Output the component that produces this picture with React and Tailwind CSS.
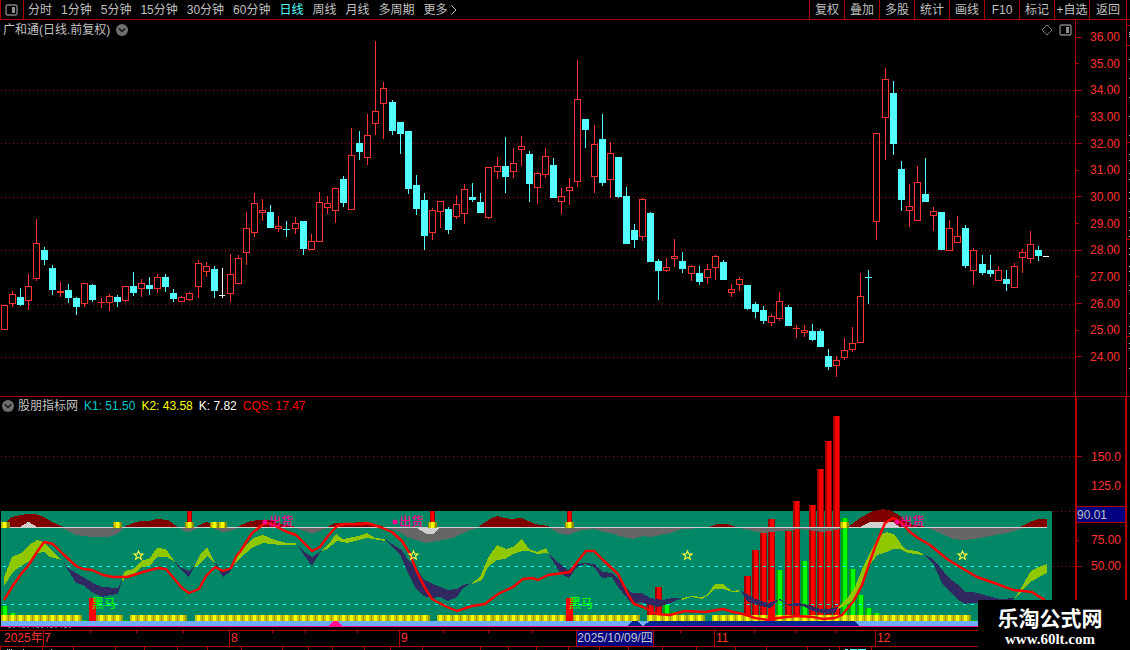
const PERIODS = ['分时', '1分钟', '5分钟', '15分钟', '30分钟', '60分钟', '日线', '周线', '月线', '多周期']

const TOOLS = ['复权', '叠加', '多股', '统计', '画线', 'F10', '标记', '+自选', '返回']

const PRICES = [36, 35, 34, 33, 32, 31, 30, 29, 28, 27, 26, 25, 24]

// x, high, body top, body bottom, low, kind (r = up, c = down, w = flat)
const CANDLES = [
  [4, 305, 305, 330, 330, 'r'], [12, 291, 294, 304, 307, 'r'], [20, 288, 297, 305, 306, 'c'],
  [28, 274, 286, 301, 310, 'r'], [36, 219, 243, 279, 281, 'r'], [44, 247, 250, 260, 265, 'c'],
  [52, 265, 268, 290, 295, 'c'], [60, 282, 291, 293, 297, 'r'], [68, 284, 290, 298, 303, 'c'],
  [76, 297, 298, 307, 315, 'c'], [84, 283, 283, 304, 307, 'r'], [92, 284, 285, 300, 302, 'c'],
  [101, 298, 302, 303, 308, 'r'], [109, 294, 296, 303, 311, 'r'], [117, 295, 297, 302, 307, 'c'],
  [125, 286, 286, 301, 302, 'r'], [133, 272, 286, 293, 296, 'c'], [141, 279, 283, 289, 297, 'r'],
  [149, 277, 285, 289, 295, 'c'], [157, 274, 277, 289, 293, 'r'], [165, 274, 277, 287, 292, 'c'],
  [173, 289, 293, 299, 302, 'c'], [181, 296, 297, 302, 302, 'r'], [189, 292, 293, 300, 301, 'r'],
  [198, 260, 263, 287, 298, 'r'], [206, 262, 266, 272, 277, 'r'], [214, 266, 269, 291, 298, 'c'],
  [222, 268, 295, 296, 298, 'w'], [230, 254, 274, 294, 302, 'r'], [238, 255, 258, 284, 284, 'r'],
  [246, 212, 228, 253, 265, 'r'], [254, 193, 203, 233, 237, 'r'], [262, 199, 210, 213, 221, 'r'],
  [270, 205, 212, 228, 228, 'c'], [278, 216, 226, 229, 232, 'r'], [286, 221, 229, 230, 237, 'c'],
  [295, 217, 223, 229, 234, 'r'], [303, 221, 221, 249, 255, 'c'], [311, 234, 241, 250, 250, 'r'],
  [319, 192, 202, 242, 242, 'r'], [327, 196, 203, 208, 214, 'r'], [335, 188, 188, 211, 223, 'r'],
  [343, 176, 179, 203, 207, 'c'], [351, 128, 155, 210, 210, 'r'], [359, 131, 143, 152, 160, 'c'],
  [367, 114, 135, 158, 165, 'r'], [375, 41, 111, 124, 135, 'r'], [383, 82, 88, 104, 139, 'r'],
  [392, 100, 102, 131, 135, 'c'], [400, 122, 122, 134, 154, 'c'], [408, 131, 131, 189, 194, 'c'],
  [416, 175, 185, 209, 215, 'c'], [424, 193, 200, 236, 250, 'c'], [432, 208, 210, 233, 240, 'r'],
  [440, 201, 201, 212, 228, 'r'], [448, 207, 209, 230, 234, 'c'], [456, 195, 204, 217, 219, 'r'],
  [464, 184, 189, 214, 224, 'r'], [472, 183, 197, 200, 202, 'c'], [480, 193, 202, 213, 213, 'c'],
  [488, 167, 167, 218, 219, 'r'], [497, 157, 166, 172, 179, 'r'], [505, 137, 166, 177, 193, 'c'],
  [513, 148, 163, 172, 178, 'r'], [521, 136, 146, 150, 166, 'r'], [529, 151, 154, 184, 202, 'c'],
  [537, 172, 173, 188, 204, 'r'], [545, 148, 156, 175, 178, 'r'], [553, 158, 165, 198, 198, 'c'],
  [561, 188, 196, 202, 214, 'r'], [569, 178, 187, 191, 205, 'r'], [577, 60, 99, 182, 187, 'r'],
  [585, 119, 119, 130, 148, 'c'], [594, 125, 144, 177, 193, 'r'], [602, 114, 139, 183, 186, 'c'],
  [610, 142, 153, 180, 198, 'r'], [618, 157, 157, 197, 198, 'c'], [626, 187, 196, 244, 244, 'c'],
  [634, 224, 230, 240, 248, 'c'], [642, 198, 199, 237, 241, 'r'], [650, 212, 213, 262, 262, 'c'],
  [658, 259, 261, 271, 300, 'c'], [666, 258, 267, 271, 272, 'r'], [674, 239, 256, 259, 267, 'r'],
  [682, 252, 261, 269, 273, 'c'], [691, 265, 266, 274, 281, 'r'], [699, 266, 273, 282, 285, 'c'],
  [707, 264, 269, 278, 284, 'r'], [715, 255, 256, 268, 280, 'r'], [723, 260, 262, 280, 280, 'c'],
  [731, 284, 289, 293, 297, 'r'], [739, 277, 279, 285, 291, 'r'], [747, 285, 285, 309, 310, 'c'],
  [755, 302, 304, 312, 318, 'c'], [763, 306, 310, 321, 324, 'c'], [771, 314, 316, 323, 326, 'r'],
  [779, 292, 301, 319, 321, 'r'], [788, 305, 307, 326, 326, 'c'], [796, 325, 328, 329, 338, 'r'],
  [804, 325, 330, 333, 337, 'r'], [812, 324, 331, 340, 341, 'c'], [820, 329, 331, 347, 347, 'c'],
  [828, 349, 356, 367, 370, 'c'], [836, 356, 360, 366, 377, 'r'], [844, 338, 350, 358, 360, 'r'],
  [852, 327, 343, 350, 352, 'r'], [860, 273, 296, 343, 343, 'r'], [868, 270, 277, 278, 304, 'c'],
  [876, 133, 133, 222, 240, 'r'], [885, 68, 79, 118, 160, 'r'], [893, 81, 93, 144, 155, 'c'],
  [901, 161, 169, 200, 211, 'c'], [909, 184, 206, 211, 227, 'r'], [917, 166, 182, 221, 221, 'r'],
  [925, 158, 194, 202, 202, 'c'], [933, 207, 211, 216, 231, 'r'], [941, 212, 212, 250, 250, 'c'],
  [949, 220, 228, 251, 251, 'r'], [957, 216, 236, 243, 243, 'r'], [965, 225, 228, 266, 268, 'c'],
  [973, 248, 250, 271, 285, 'r'], [982, 255, 264, 273, 275, 'c'], [990, 255, 270, 274, 277, 'c'],
  [998, 266, 270, 281, 281, 'r'], [1006, 270, 279, 284, 291, 'c'], [1014, 263, 266, 288, 288, 'r'],
  [1022, 249, 252, 258, 273, 'r'], [1030, 231, 244, 259, 263, 'r'], [1038, 246, 250, 256, 261, 'c'],
  [1046, 256, 256, 257, 257, 'w'],
]

const CANDLE_COLORS = { r: '#ff3232', c: '#54ffff', w: '#ffffff' }

// areas above the 90 line
const HUMPS = [
  '2,527 4,524 8,520 12,517 20,515 28,514 36,514 44,517 52,522 64,527',
  '124,527 133,523 141,521 149,521 157,519 168,520 178,527',
  '196,527 206,522 214,524 218,527',
  '237,527 248,522 257,520 270,520 280,524 297,527',
  '327,527 335,523 345,523 367,522 385,527',
  '478,527 490,519 497,516 510,519 522,518 535,524 548,526 550,527',
  '708,527 717,524 728,524 736,527',
  '848,527 860,518 873,511 883,509 892,511 900,516 905,520 913,525 928,527',
  '1020,527 1032,521 1038,519 1047,519 1047,527',
]

// areas below it
const DIPS = [
  '62,528 76,535 92,537 108,537 117,534 124,528',
  '180,528 185,531 189,532 198,528',
  '213,528 222,532 230,531 238,528',
  '296,528 312,534 327,528',
  '387,528 398,531 407,537 425,543 437,541 453,538 468,531 477,528',
  '550,528 558,533 568,535 582,530 595,529 603,532 610,533 622,537 633,539 642,536 650,537 670,533 683,529 703,528',
  '740,528 753,531 763,533 780,531 800,529 823,532 847,528',
  '928,528 940,533 953,539 962,540 975,539 990,536 1007,533 1018,530 1023,528',
]

const CAPS = [
  '20,527 28,522 29,522 37,527',
  '417,528 422,531 427,534 433,534 440,528',
  '860,527 870,522 893,522 900,527',
]

const RISING = [
  '4,577 12,557 21,553 29,545 37,540 44,542 53,552 62,560 50,557 44,552 37,553 28,562 21,566 13,572 4,586',
  '122,578 125,571 134,569 142,560 149,559 157,548 166,549 175,562 167,557 157,557 150,566 142,567 133,575 125,577 123,582',
  '194,567 200,555 207,547 212,557 215,563 207,556 197,566',
  '233,563 240,552 253,538 263,535 275,540 287,543 296,543 296,545 280,545 263,543 252,548 240,558 233,565',
  '321,551 328,545 336,534 343,539 358,536 367,533 375,538 385,539 385,541 367,538 347,543 337,541 327,549',
  '472,583 480,577 488,558 497,545 506,549 513,547 522,539 529,549 537,552 546,548 549,554 546,553 537,554 528,551 522,551 513,554 505,559 497,560 488,567 482,580 472,584',
  '682,598 692,596 702,597 707,595 715,584 723,584 732,591 739,590 739,592 732,592 723,589 715,589 707,596 702,599 692,597 682,600',
  '838,607 847,599 855,587 863,567 875,543 882,534 887,532 895,535 903,547 908,550 917,551 923,554 923,555 908,553 900,549 893,549 887,552 877,555 870,565 862,585 855,597 848,604 838,609',
  '1015,598 1023,585 1030,572 1038,567 1047,564 1047,573 1030,582 1023,590',
]

const FALLING = [
  '62,560 68,568 76,573 85,578 93,583 102,587 118,588 122,580 118,594 110,595 102,597 92,592 83,585 76,583 70,573',
  '175,562 180,567 189,571 194,567 189,577 180,569',
  '215,563 217,565 223,572 230,570 231,571 223,577 217,568',
  '296,543 303,551 312,557 321,551 312,566 302,552',
  '385,539 392,544 402,550 408,560 417,568 423,579 433,584 448,590 457,589 463,585 472,583 463,588 457,597 448,601 440,597 432,598 423,596 415,587 408,573 400,554 387,542',
  '549,554 555,560 568,570 576,564 585,563 594,564 603,572 612,573 620,580 628,590 633,593 642,593 650,598 663,600 672,598 682,598 673,602 658,607 650,605 640,602 633,605 627,598 618,587 612,577 602,578 594,567 585,564 577,567 569,578 560,573 550,556',
  '739,590 747,594 755,599 768,603 780,599 788,604 798,603 808,605 820,609 827,609 838,607 835,613 827,614 813,611 803,606 790,606 779,600 770,608 760,606 748,602 742,593',
  '923,554 933,559 940,567 948,577 957,584 965,592 973,592 1000,599 1015,598 1010,602 990,603 968,603 965,604 957,599 942,583 933,563',
]

const TREND =
  '4,600 12,587 21,574 28,566 37,552 44,542 53,544 63,554 76,566 83,569 92,570 103,575 113,577 127,577 143,572 158,568 166,569 182,588 189,593 199,589 206,576 215,567 223,571 231,568 237,555 240,552 252,533 265,523 272,524 285,531 296,535 312,551 320,547 328,536 337,526 345,524 362,524 367,523 380,527 392,532 402,541 410,554 417,572 425,588 432,599 447,607 457,611 472,606 485,604 498,594 513,587 523,579 532,578 538,580 548,575 563,573 570,572 578,561 586,551 594,551 603,560 618,574 628,594 634,604 643,607 657,614 670,615 685,611 705,612 723,609 733,612 743,614 755,618 768,620 778,618 797,616 813,617 823,619 835,618 842,615 853,602 862,585 875,547 885,523 893,518 902,523 910,532 918,538 930,545 947,559 960,567 977,577 997,584 1013,590 1023,591 1032,592 1038,596 1045,600'

// x, top
const RED_BARS = [
  [650, 604], [658, 587], [747, 576], [755, 550], [763, 533], [771, 519],
  [788, 531], [796, 501], [812, 505], [820, 469], [828, 441], [836, 416],
]

const GREEN_BARS = [
  [4, 606], [12, 613], [666, 604], [674, 612], [779, 570], [804, 561],
  [844, 518], [852, 569], [860, 595], [868, 608], [876, 613],
]

const BAND_GAPS = [84, 125, 189, 432, 642, 707]
const TAGS = [4, 117, 189, 214, 222, 432, 569, 844]
const TIME_TICKS = [90, 136, 183, 272, 305, 357, 443, 488, 532, 680, 754, 795, 835]
const FOOT_TICKS = [
  0, 42, 73, 115, 144, 177, 207, 241, 282, 308, 332, 364, 390, 422, 480,
  508, 536, 568, 599, 628, 662, 696, 735, 766, 807, 839, 871,
]
const EDGE_MARKS = [
  32, 34, 36, 59, 78, 97, 116, 135, 154, 160, 173, 179, 192, 198, 211, 217, 230,
  236, 248, 254, 266, 271, 285, 290, 313, 326, 333, 343, 348, 368,
]

function Candle({ data }) {
  const [x, high, top, bottom, low, kind] = data
  const color = CANDLE_COLORS[kind]
  const hollow = kind === 'r' && bottom - top > 2

  return (
    <g fill={color}>
      {top > high && <rect x={x} y={high} width="1" height={top - high} />}
      {low > bottom && <rect x={x} y={bottom} width="1" height={low - bottom} />}
      {hollow ? (
        <rect x={x - 2.5} y={top + 0.5} width="6" height={bottom - top - 1} fill="none" stroke={color} />
      ) : (
        <rect x={x - 3} y={top} width={kind === 'w' ? 6 : 7} height={bottom - top} />
      )}
    </g>
  )
}

function Bar({ x, top, bottom, edge, core }) {
  return (
    <g>
      <rect x={x - 3} y={top} width="7" height={bottom - top} fill={edge} />
      <rect x={x - 1} y={top} width="4" height={bottom - top} fill={core} />
    </g>
  )
}

function Shapes({ list, fill }) {
  return list.map((points) => <polygon key={points} points={points} fill={fill} />)
}

function Star({ x, y }) {
  return (
    <path
      transform={`translate(${x} ${y})`}
      d="M.5-4 1.7-1H5L2.4 1 3.4 4.2.5 2.3-2.4 4.2-1.4 1-4-1H-.7Z"
      fill="none"
      stroke="#ffff40"
      strokeWidth="1.1"
      shapeRendering="auto"
    />
  )
}

function PanelIcon() {
  return (
    <svg className="h-[12px] w-[13px]" viewBox="0 0 13 12" fill="none">
      <rect x="1" y="1" width="11" height="10" rx="1.5" stroke="#808080" strokeWidth="1.4" />
      <rect x="7" y="3" width="3" height="6" fill="#909090" />
    </svg>
  )
}

function RoundToggle({ label }) {
  return (
    <button aria-label={label} className="flex size-3 items-center justify-center rounded-full bg-[#6e6e6e]">
      <svg className="size-3" viewBox="0 0 12 12" fill="none">
        <path d="M3 4.5 6 7.5 9 4.5" stroke="#101010" strokeWidth="1.4" />
      </svg>
    </button>
  )
}

function Toolbar() {
  return (
    <header className="flex h-5 items-stretch border-b border-l border-[#b00000] pr-[3px] text-[#c0c0c0]">
      <button aria-label="侧栏" className="flex w-[23px] items-center border-r border-[#b00000] pl-1">
        <PanelIcon />
      </button>

      <nav className="flex items-center gap-[9px] pl-1">
        {PERIODS.map((p) => (
          <button key={p} className={p === '日线' ? 'text-[#54ffff]' : ''}>
            {p}
          </button>
        ))}
        <button className="flex items-center gap-[3px]">
          更多
          <svg className="h-[10px] w-[6px]" viewBox="0 0 6 10" fill="none">
            <path d="M.5.5 5 5 .5 9.5" stroke="#c0c0c0" />
          </svg>
        </button>
      </nav>

      <div className="ml-auto flex border-r border-[#b00000]">
        {TOOLS.map((t) => (
          <button key={t} className="w-[35px] border-l border-[#b00000] text-center last:w-[37px]">
            {t}
          </button>
        ))}
      </div>
    </header>
  )
}

function PriceChart() {
  return (
    <section className="flex h-[376px]">
      <div className="min-w-0 flex-1">
        <div className="flex h-5 items-center px-[3px] text-[#c0c0c0]">
          <h1>广和通(日线.前复权)</h1>
          <div className="ml-1.5 flex">
            <RoundToggle label="展开" />
          </div>
          <div className="ml-auto flex items-center gap-1.5">
            <svg className="size-3" viewBox="0 0 12 12" fill="none">
              <path d="M6 1 11 6 6 11 1 6Z" stroke="#808080" />
            </svg>
            <PanelIcon />
          </div>
        </div>

        <svg
          className="block h-[356px] w-full"
          viewBox="0 40 1075 356"
          preserveAspectRatio="none"
          shapeRendering="crispEdges"
        >
          {[90, 143, 197, 250, 304, 357].map((y) => (
            <path key={y} d={`M1 ${y}.5H1075`} stroke="#b00000" strokeDasharray="1 3" />
          ))}
          {CANDLES.map((c) => (
            <Candle key={c[0]} data={c} />
          ))}
        </svg>
      </div>

      <ul className="flex w-[52px] flex-col justify-between border-x border-[#b00000] pt-[9px] pb-[31px] text-[#ff3232]">
        {PRICES.map((p) => (
          <li key={p} className="flex h-4 items-center">
            <span className={p % 2 ? 'h-px w-[3px] bg-[#b00000]' : 'h-px w-[6px] bg-[#b00000]'} />
            <span className="ml-auto pr-[6px]">{p}.00</span>
          </li>
        ))}
      </ul>

      <svg className="h-[376px] w-[3px]" viewBox="0 20 3 376" shapeRendering="crispEdges">
        {[25, 45, 142, 239, 336].map((y) => (
          <rect key={y} x="0" y={y} width="3" height="1" fill="#b00000" />
        ))}
        {EDGE_MARKS.map((y) => (
          <rect key={y} x="2" y={y} width="1" height="1" fill="#d0d0d0" />
        ))}
      </svg>
    </section>
  )
}

function IndicatorPlot() {
  const band = CANDLES.map((c) => c[0]).filter((x) => x <= 965 && !BAND_GAPS.includes(x))

  return (
    <svg
      className="block h-[216px] w-full"
      viewBox="0 414 1075 216"
      preserveAspectRatio="none"
      shapeRendering="crispEdges"
    >
      {[456, 511, 566].map((y) => (
        <path key={y} d={`M1 ${y}.5H1075`} stroke="#b00000" strokeDasharray="1 3" />
      ))}

      <rect x="1" y="511" width="1051" height="115" fill="#008866" />

      {/* volume bars */}
      {RED_BARS.map(([x, top]) => (
        <Bar key={x} x={x} top={top} bottom={616} edge="#a00000" core="#ff0000" />
      ))}
      {GREEN_BARS.map(([x, top]) => (
        <Bar key={x} x={x} top={top} bottom={616} edge="#00a000" core="#00ff00" />
      ))}

      {/* areas round the 90 line */}
      <Shapes list={HUMPS} fill="#800000" />
      <Shapes list={DIPS} fill="#666666" />
      <Shapes list={CAPS} fill="#d0d0d0" />
      <rect x="1" y="527" width="1046" height="1" fill="#d0d0d0" />

      {[189, 432, 569].map((x) => (
        <g key={x}>
          <rect x={x - 2} y="511" width="5" height="11" fill="#a00000" />
          <rect x={x - 1} y="511" width="3" height="11" fill="#ff0000" />
        </g>
      ))}
      {TAGS.map((x) => (
        <g key={x}>
          <rect x={Math.max(x - 4, 1)} y="522" width="9" height="6" fill="#8c8c00" />
          <rect x={x - 3} y="522" width="6" height="6" fill="#c8c800" />
          <rect x={x - 1} y="522" width="3" height="6" fill="#ffff00" />
        </g>
      ))}

      {/* yellow band and the blue strip under it */}
      {band.map((x) => (
        <g key={x}>
          <rect x={x - 3} y="615" width="9" height="6" fill="#a0a000" />
          <rect x={x - 3} y="615" width="7" height="6" fill="#c8c800" />
          <rect x={x - 1} y="615" width="3" height="6" fill="#ffff00" />
        </g>
      ))}
      {[84, 125, 973].map((x) => (
        <rect key={x} x={x - 2} y="620" width="5" height="1" fill="#00c800" />
      ))}
      <rect x="768" y="600" width="7" height="21" fill="#ff0000" />
      <rect x="1" y="621" width="1051" height="5" fill="#70acff" />
      <polygon points="627,626 633,621 637,621 643,626 650,621 854,621 860,626" fill="#002890" />
      <rect x="1" y="626" width="1051" height="1" fill="#ff1090" />
      <polygon points="328,627 333,621 338,621 343,627" fill="#ff1090" />
      <path d="M8 627.5H73" stroke="#707070" strokeDasharray="3 2 2 4 1 2" />

      {[566, 604].map((y) => (
        <path key={y} d={`M3 ${y}.5H1047`} stroke="#00ffff" strokeDasharray="3 5" />
      ))}

      <rect x="89" y="598" width="7" height="23" fill="#ff0000" />
      <rect x="566" y="598" width="7" height="23" fill="#ff0000" />

      <Shapes list={RISING} fill="#8fc800" />
      <Shapes list={FALLING} fill="#302860" />
      <polyline points={TREND} fill="none" stroke="#ff0000" strokeWidth="2.4" strokeLinejoin="round" shapeRendering="auto" />

      {[138, 413, 687, 962].map((x) => (
        <Star key={x} x={x} y={555} />
      ))}

      {/* signals */}
      <g fill="#00ff00" fontSize="12" fontWeight="500">
        <text x="92" y="608">黑马</text>
        <text x="569" y="608">黑马</text>
      </g>
      <g fill="#ff0090" fontSize="12" fontWeight="500" shapeRendering="auto">
        <circle cx="265" cy="522" r="2.5" />
        <text x="269" y="526">出货</text>
        <circle cx="395" cy="522" r="2.5" />
        <text x="399" y="526">出货</text>
        <circle cx="897" cy="522" r="2.5" />
        <text x="900" y="526">出货</text>
      </g>
    </svg>
  )
}

function Indicator() {
  return (
    <section className="flex h-[234px] border-t border-[#b00000]">
      <div className="min-w-0 flex-1">
        <div className="flex h-[17px] items-center gap-[6px] pl-[2px]">
          <div className="flex items-center gap-1">
            <RoundToggle label="指标" />
            <h2 className="text-[#c0c0c0]">股朋指标网</h2>
          </div>
          <span className="text-[#00c8c8]">K1: 51.50</span>
          <span className="text-[#ffff00]">K2: 43.58</span>
          <span className="text-white">K: 7.82</span>
          <span className="text-[#ff0000]">CQS: 17.47</span>
        </div>
        <IndicatorPlot />
      </div>

      <ul className="w-[52px] border-x-2 border-[#b00000] pt-[45px] text-[#ff3232]">
        <li className="flex h-[29px] items-center">
          <span className="h-px w-[5px] bg-[#b00000]" />
          <span className="ml-auto pr-1">150.0</span>
        </li>
        <li className="flex h-[29px] items-center">
          <span className="ml-auto pr-1">125.0</span>
        </li>
        <li className="mt-[6px] mb-1 flex h-[17px] items-center border-y border-[#b00000] bg-[#000080] text-[#c0c0c0]">
          90.01
        </li>
        <li className="flex h-[26px] items-center">
          <span className="h-px w-[2px] bg-[#b00000]" />
          <span className="ml-auto pr-1">75.00</span>
        </li>
        <li className="flex h-[26px] items-center">
          <span className="h-px w-[5px] bg-[#b00000]" />
          <span className="ml-auto pr-1">50.00</span>
        </li>
      </ul>

      <div className="w-[3px]" />
    </section>
  )
}

function TimeAxis() {
  return (
    <section className="relative border-y border-[#b00000] text-[#ff3232]">
      <div className="grid h-[15px] grid-cols-[43fr_186fr_170fr_177fr_78fr_60fr_161fr_255fr] items-stretch leading-[15px] whitespace-nowrap">
        <span className="pl-1">2025年</span>
        <span className="border-l border-[#b00000]">7</span>
        <span className="border-l border-[#b00000] pl-px">8</span>
        <span className="border-l border-[#b00000] pl-px">9</span>
        <span className="border-x border-[#b00000] bg-[#000080] text-center text-[#c8c8c8]">2025/10/09/四</span>
        <span />
        <span className="border-l border-[#b00000] pl-px">11</span>
        <span className="border-l border-[#b00000] pl-px">12</span>
      </div>
      <svg
        className="absolute top-0 left-0 h-[3px] w-full"
        viewBox="0 0 1130 3"
        preserveAspectRatio="none"
        shapeRendering="crispEdges"
      >
        {TIME_TICKS.map((x) => (
          <rect key={x} x={x} y="0" width="1" height="2" fill="#b00000" />
        ))}
      </svg>
    </section>
  )
}

function Footer() {
  return (
    <svg
      className="block h-[3px] w-full"
      viewBox="0 0 1130 3"
      preserveAspectRatio="none"
      shapeRendering="crispEdges"
    >
      {FOOT_TICKS.map((x) => (
        <rect key={x} x={x} y="0" width="1" height="3" fill="#b00000" />
      ))}
      <path d="M7 2.5H13M23 2.5H24M51 2.5H52M829 2.5H830" stroke="#d0d0d0" strokeDasharray="1 1" />
      <path d="M845 2.5H848M850 2.5H857M858 2.5H866" stroke="#54ffff" />
    </svg>
  )
}

export default function App() {
  return (
    <main className="relative min-h-screen overflow-hidden bg-black font-['Liberation_Sans','Noto_Sans_CJK_SC',sans-serif] text-[12px] leading-4">
      <Toolbar />
      <PriceChart />
      <Indicator />
      <TimeAxis />
      <Footer />

      {/* site mark */}
      <div className="absolute right-0 bottom-0 flex h-[50px] w-[152px] flex-col items-center bg-black pt-[6px] pr-[8px] font-bold text-white">
        <span className="text-[21px] leading-[25px]">乐淘公式网</span>
        <a href="#" className="font-['Liberation_Serif',serif] text-[15px] leading-4">
          www.60lt.com
        </a>
      </div>
    </main>
  )
}
